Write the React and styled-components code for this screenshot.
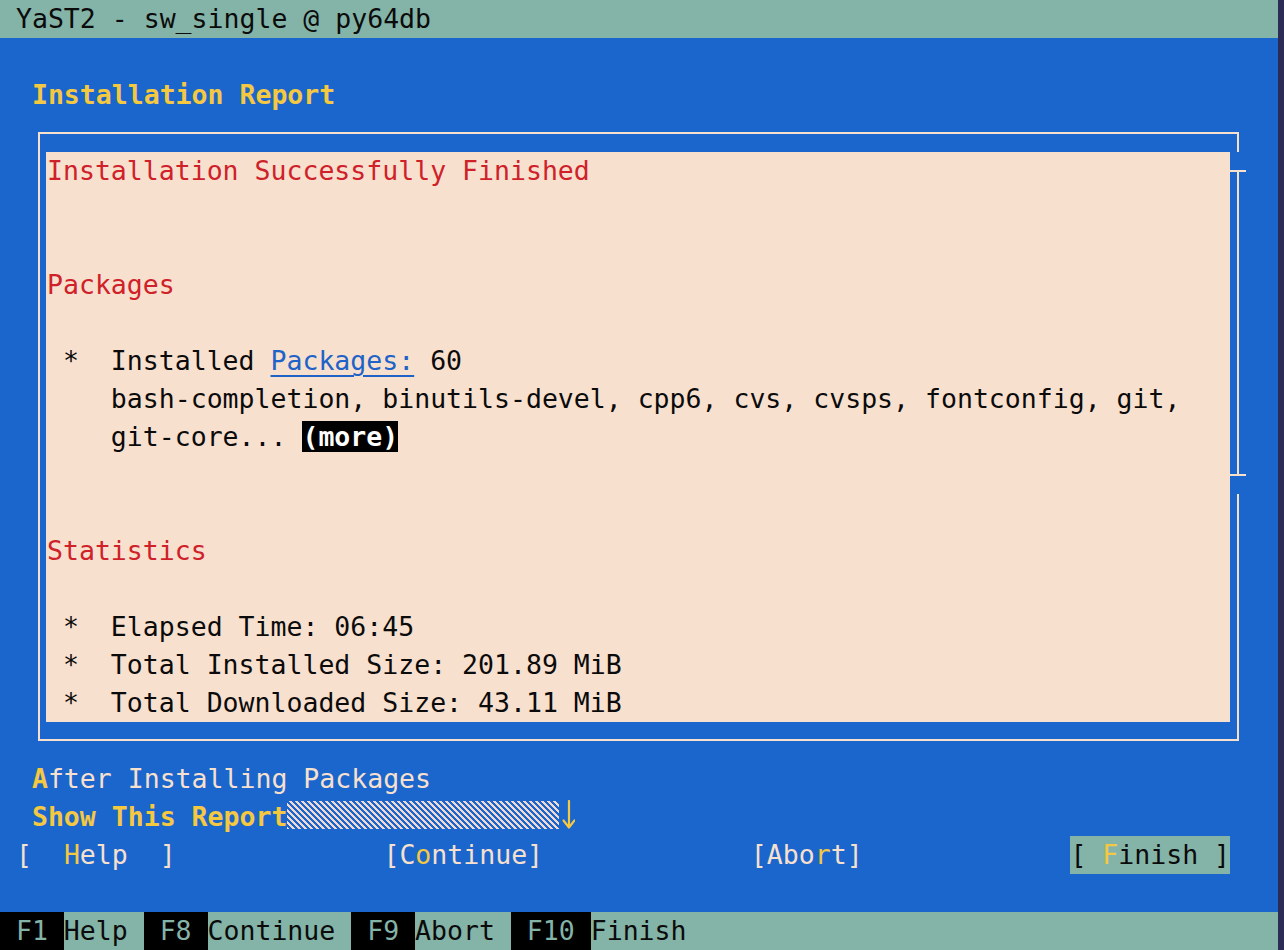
import React from "react";
import styled, { createGlobalStyle } from "styled-components";

const CW = 15.975; // terminal cell width
const ROW = 38; // terminal cell height

const C = {
  blue: "#1b66cc",
  green: "#84b3a8",
  peach: "#f8e0cf",
  yellow: "#f5c842",
  red: "#cf2129",
  link: "#2063c8",
  ink: "#0b0b0b",
  edge: "#2b2b55",
};

const GlobalStyle = createGlobalStyle`
  html, body {
    margin: 0;
    padding: 0;
    overflow: hidden;
    background: ${C.blue};
  }
`;

const Screen = styled.div`
  display: flex;
  width: 1284px;
  height: 950px;
`;

const Terminal = styled.div`
  display: flex;
  flex-direction: column;
  width: ${80 * CW}px;
  height: 950px;
  background: ${C.blue};
  font-family: "DejaVu Sans Mono", "Liberation Mono", monospace;
  font-size: 26.53px;
  line-height: ${ROW}px;
  color: ${C.peach};
  white-space: pre;
`;

const Edge = styled.div`
  flex: 1;
  background: ${C.edge};
`;

const TitleBar = styled.div`
  height: ${ROW}px;
  background: ${C.green};
  color: ${C.ink};
  padding-left: ${CW}px;
`;

const Heading = styled.div`
  margin-top: ${ROW}px;
  height: ${ROW}px;
  padding-left: ${2 * CW}px;
  color: ${C.yellow};
  font-weight: bold;
`;

const Frame = styled.div`
  display: flex;
  margin: 18px 0 0 38px;
  width: 1201px;
  height: 609px;
  box-sizing: border-box;
  border: 2px solid ${C.peach};
  border-right: 0;
`;

const Report = styled.div`
  display: flex;
  flex-direction: column;
  margin: 18px 0 17px 6px;
  width: 1184px;
  padding-left: 1px;
  box-sizing: border-box;
  background: ${C.peach};
  color: ${C.ink};
`;

const ReportLine = styled.div`
  height: ${ROW}px;
  color: ${(p) => (p.$tone === "red" ? C.red : C.ink)};
`;

const Link = styled.span`
  color: ${C.link};
  text-decoration: underline;
  text-underline-offset: 5px;
  text-decoration-thickness: 2px;
`;

const MoreTag = styled.span`
  background: #000;
  color: #fff;
  font-weight: bold;
`;

const ScrollRail = styled.div`
  display: flex;
  flex-direction: column;
  width: 9px;
`;

const RailLine = styled.div`
  box-sizing: border-box;
  border-right: 2px solid ${C.peach};
  height: ${(p) => (p.$h ? `${p.$h}px` : "auto")};
  flex: ${(p) => (p.$h ? "none" : "1")};
`;

const RailGap = styled.div`
  height: ${(p) => p.$h}px;
  flex: none;
`;

const RailThumb = styled.div`
  box-sizing: border-box;
  width: 16px;
  height: ${(p) => p.$h}px;
  flex: none;
  border-top: 2px solid ${C.peach};
  border-bottom: 2px solid ${C.peach};
  background: linear-gradient(
    to right,
    transparent 7px,
    ${C.peach} 7px,
    ${C.peach} 9px,
    transparent 9px
  );
`;

const OptionLabel = styled.div`
  margin-top: 19px;
  height: ${ROW}px;
  padding-left: ${2 * CW}px;
  color: ${C.peach};
`;

const Hot = styled.span`
  color: ${C.yellow};
  font-weight: ${(p) => (p.$bold ? "bold" : "normal")};
`;

const Combo = styled.div`
  display: flex;
  align-items: flex-start;
  height: ${ROW}px;
  padding-left: ${2 * CW}px;
`;

const ComboLabel = styled.span`
  color: ${C.yellow};
  font-weight: bold;
`;

const Hatch = styled.span`
  display: block;
  width: ${17 * CW}px;
  height: 28px;
  margin-top: 3px;
  background: repeating-linear-gradient(
    45deg,
    #efd9d0 0 1.7px,
    transparent 1.7px 4.24px
  );
`;

const ComboArrow = styled.svg`
  display: block;
  width: ${CW}px;
  height: 30px;
  margin-top: 2px;
`;

const ButtonBar = styled.div`
  display: flex;
  justify-content: space-between;
  height: ${ROW}px;
  padding-left: ${CW}px;
  width: ${76 * CW}px;
`;

const Button = styled.span`
  color: ${(p) => (p.$focused ? C.ink : C.peach)};
  background: ${(p) => (p.$focused ? C.green : "transparent")};
`;

const FKeyBar = styled.div`
  display: flex;
  margin-top: ${ROW}px;
  height: ${ROW}px;
  background: ${C.green};
  color: ${C.ink};
`;

const FKey = styled.span`
  background: #000;
  color: ${C.green};
`;

const FLabel = styled.span`
  color: ${C.ink};
`;

const fkeys = [
  ["F1", "Help"],
  ["F8", "Continue"],
  ["F9", "Abort"],
  ["F10", "Finish"],
];

export default function App() {
  return (
    <>
      <GlobalStyle />
      <Screen>
        <Terminal>
          <TitleBar>YaST2 - sw_single @ py64db</TitleBar>
          <Heading>Installation Report</Heading>
          <Frame>
            <Report>
              <ReportLine $tone="red">Installation Successfully Finished</ReportLine>
              <ReportLine />
              <ReportLine />
              <ReportLine $tone="red">Packages</ReportLine>
              <ReportLine />
              <ReportLine>
                {" *  Installed "}
                <Link>Packages:</Link>
                {" 60"}
              </ReportLine>
              <ReportLine>
                {"    bash-completion, binutils-devel, cpp6, cvs, cvsps, fontconfig, git,"}
              </ReportLine>
              <ReportLine>
                {"    git-core... "}
                <MoreTag>(more)</MoreTag>
              </ReportLine>
              <ReportLine />
              <ReportLine />
              <ReportLine $tone="red">Statistics</ReportLine>
              <ReportLine />
              <ReportLine>{" *  Elapsed Time: 06:45"}</ReportLine>
              <ReportLine>{" *  Total Installed Size: 201.89 MiB"}</ReportLine>
              <ReportLine>{" *  Total Downloaded Size: 43.11 MiB"}</ReportLine>
            </Report>
            <ScrollRail>
              <RailLine $h={18} />
              <RailGap $h={18} />
              <RailThumb $h={306} />
              <RailGap $h={18} />
              <RailLine />
            </ScrollRail>
          </Frame>
          <OptionLabel>
            <Hot $bold>A</Hot>fter Installing Packages
          </OptionLabel>
          <Combo>
            <ComboLabel>Show This Report</ComboLabel>
            <Hatch />
            <ComboArrow viewBox="0 0 16 30" aria-label="↓">
              <path
                d="M10 1 V27 M4.5 20.5 L10 27.5 L15.5 20.5"
                fill="none"
                stroke={C.yellow}
                strokeWidth="2.2"
                strokeLinecap="round"
                strokeLinejoin="round"
              />
            </ComboArrow>
          </Combo>
          <ButtonBar>
            <Button>
              {"[  "}
              <Hot>H</Hot>
              {"elp  ]"}
            </Button>
            <Button>
              {"[C"}
              <Hot>o</Hot>
              {"ntinue]"}
            </Button>
            <Button>
              {"[Abo"}
              <Hot>r</Hot>
              {"t]"}
            </Button>
            <Button $focused>
              {"[ "}
              <Hot>F</Hot>
              {"inish ]"}
            </Button>
          </ButtonBar>
          <FKeyBar>
            {fkeys.map(([k, label], i) => (
              <React.Fragment key={k}>
                <FKey>{` ${k} `}</FKey>
                <FLabel>{i < fkeys.length - 1 ? `${label} ` : label}</FLabel>
              </React.Fragment>
            ))}
          </FKeyBar>
        </Terminal>
        <Edge />
      </Screen>
    </>
  );
}
